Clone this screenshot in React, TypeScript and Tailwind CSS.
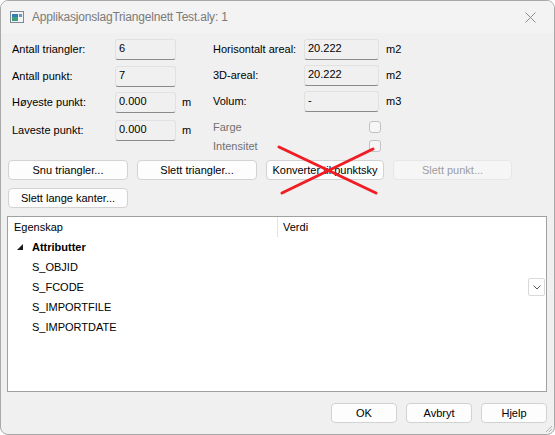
import React from "react";

const font = { fontFamily: '"Liberation Sans", Arial, sans-serif' };

const Field = ({ value, w }: { value: string; w: string }) => (
  <div
    className={`${w} h-[21px] flex items-center pl-[3px] pb-[3px] rounded-[3px] border border-[#e1e1e1] border-b-[#8a8a8a] bg-[#f0f0f0] text-[11px] text-black`}
  >
    {value}
  </div>
);

const Btn = ({ label, w = "w-[120px]", disabled = false }: { label: string; w?: string; disabled?: boolean }) => (
  <div
    className={`${w} h-[20px] shrink-0 flex items-center justify-center rounded-[4px] border text-[11px] ${
      disabled
        ? "border-[#e6e6e6] bg-[#f6f6f6] text-[#9d9d9d]"
        : "border-[#d2d2d2] bg-[#fdfdfd] text-black"
    }`}
  >
    {label}
  </div>
);

const Check = () => (
  <div className="w-[12px] h-[12px] rounded-[3px] border border-[#c2c2c2] bg-[#f6f6f6]" />
);

const leftRows = [
  { label: "Antall triangler:", value: "6", unit: "", mt: "mt-0" },
  { label: "Antall punkt:", value: "7", unit: "", mt: "mt-[6px]" },
  { label: "Høyeste punkt:", value: "0.000", unit: "m", mt: "mt-[5px]" },
  { label: "Laveste punkt:", value: "0.000", unit: "m", mt: "mt-[7px]" },
];

const rightRows = [
  { label: "Horisontalt areal:", value: "20.222", unit: "m2", mt: "mt-0" },
  { label: "3D-areal:", value: "20.222", unit: "m2", mt: "mt-[5px]" },
  { label: "Volum:", value: "-", unit: "m3", mt: "mt-[5px]" },
];

const attrs = ["S_OBJID", "S_FCODE", "S_IMPORTFILE", "S_IMPORTDATE"];

export default function App() {
  return (
    <div className="w-[555px] h-[435px] bg-white" style={font}>
      <div className="relative w-[555px] h-[435px] flex flex-col rounded-[8px] border border-[#a9a9a9] overflow-hidden bg-[#f0f0f0]">
        {/* title bar */}
        <div className="h-[32px] shrink-0 flex items-center pl-[9px] pr-[18px] bg-[#f3f3f3]">
          <svg width="14" height="12" viewBox="0 0 14 12">
            <rect x="0.5" y="0.5" width="13" height="11" fill="#f4f4f4" stroke="#7d8a96" />
            <rect x="2" y="3" width="6" height="7" fill="#2f7fb5" />
            <rect x="2" y="6" width="6" height="4" fill="#3da07a" />
            <rect x="9" y="3" width="3" height="3" fill="#5d9ac8" />
          </svg>
          <span className="ml-[8px] text-[12px] text-[#7a7a7a] tracking-[-0.2px]">ApplikasjonslagTriangelnett Test.aly: 1</span>
          <svg className="ml-auto" width="11" height="11" viewBox="0 0 11 11">
            <path d="M0.5 0.5 L10.5 10.5 M10.5 0.5 L0.5 10.5" stroke="#8c8c8c" strokeWidth="1" />
          </svg>
        </div>

        {/* body */}
        <div className="flex-1 flex flex-col px-[6px] pt-[6px]">
          <div className="flex">
            <div className="w-[206px] pl-[5px] flex flex-col">
              {leftRows.map((r) => (
                <div key={r.label} className={`flex items-center h-[21px] ${r.mt}`}>
                  <span className="w-[103px] text-[11px] text-black">{r.label}</span>
                  <Field value={r.value} w="w-[61px]" />
                  <span className="ml-[6px] text-[11px] text-black">{r.unit}</span>
                </div>
              ))}
            </div>
            <div className="flex flex-col">
              {rightRows.map((r) => (
                <div key={r.label} className={`flex items-center h-[21px] ${r.mt}`}>
                  <span className="w-[91px] text-[11px] text-black">{r.label}</span>
                  <Field value={r.value} w="w-[75px]" />
                  <span className="ml-[7px] text-[11px] text-black">{r.unit}</span>
                </div>
              ))}
              <div className="flex items-center h-[14px] mt-[8px]">
                <span className="w-[156px] text-[11px] text-[#707070]">Farge</span>
                <Check />
              </div>
              <div className="flex items-center h-[14px] mt-[5px]">
                <span className="w-[156px] text-[11px] text-[#707070]">Intensitet</span>
                <Check />
              </div>
            </div>
          </div>

          <div className="flex gap-[9px] mt-[7px] pl-[1px]">
            <Btn label="Snu triangler..." />
            <Btn label="Slett triangler..." />
            <Btn label="Konverter til punktsky" w="w-[118px]" />
            <Btn label="Slett punkt..." w="w-[119px]" disabled />
          </div>
          <div className="flex mt-[8px] pl-[1px]">
            <Btn label="Slett lange kanter..." />
          </div>

          {/* property grid */}
          <div className="mt-[8px] w-[540px] h-[176px] border border-[#a0a0a0] bg-white flex flex-col">
            <div className="flex h-[20px] text-[11px] text-black">
              <div className="w-[270px] pl-[6px] flex items-center border-r border-[#e3e3e3]">Egenskap</div>
              <div className="pl-[5px] flex items-center">Verdi</div>
            </div>
            <div className="flex items-center h-[20px] pl-[9px]">
              <svg width="6" height="6" viewBox="0 0 6 6">
                <polygon points="6,0 6,6 0,6" fill="#1a1a1a" />
              </svg>
              <span className="ml-[9px] text-[11px] font-bold text-black">Attributter</span>
            </div>
            {attrs.map((a, i) => (
              <div key={a} className="flex items-center h-[20px] pl-[24px] text-[11px] text-black">
                <span className="w-[496px]">{a}</span>
                {i === 1 && (
                  <div className="w-[17px] h-[18px] flex items-center justify-center border border-[#d9d9d9] rounded-[2px] bg-white">
                    <svg width="8" height="5" viewBox="0 0 8 5">
                      <path d="M0.5 0.5 L4 4 L7.5 0.5" fill="none" stroke="#555" strokeWidth="1" />
                    </svg>
                  </div>
                )}
              </div>
            ))}
          </div>

          <div className="flex justify-end gap-[9px] mt-[11px] pr-[1px]">
            <Btn label="OK" w="w-[66px]" />
            <Btn label="Avbryt" w="w-[66px]" />
            <Btn label="Hjelp" w="w-[66px]" />
          </div>
        </div>

        {/* resize grip */}
        <svg className="absolute right-[1px] bottom-[1px]" width="10" height="10" viewBox="0 0 10 10">
          <path d="M9 3 L3 9 M9 6 L6 9" stroke="#b5b5b5" strokeWidth="1" />
        </svg>

        {/* red cross drawn over the button */}
        <svg className="absolute left-[269px] top-[139px]" width="115" height="60" viewBox="0 0 115 60">
          <path d="M9 7 L106 53 M103 9 L12 53" stroke="#f01d24" strokeWidth="3" strokeLinecap="round" />
        </svg>
      </div>
    </div>
  );
}
